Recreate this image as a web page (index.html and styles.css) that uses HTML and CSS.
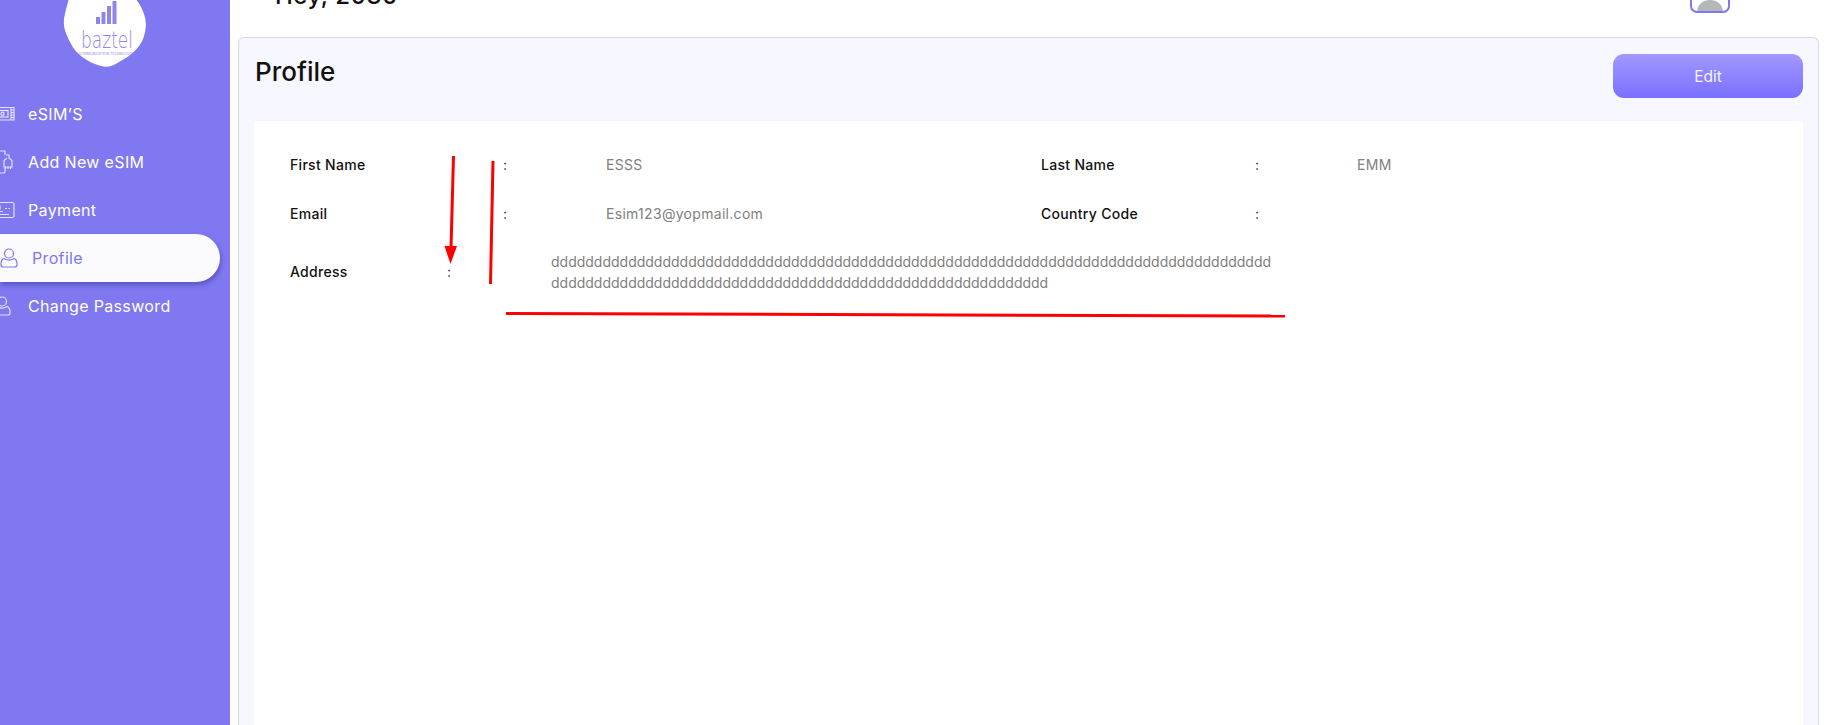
FILE: index.html
```html
<!DOCTYPE html>
<html>
  <head>
    <meta charset="utf-8" />
    <title>Profile</title>
    <link rel="stylesheet" href="styles.css">
  </head>

  <body>
    <div class="app_wrap">
      <aside class="sidebar">
        <div class="logo_wrap">
          <svg class="logo" width="84" height="68" viewBox="0 0 84 68">
            <path d="M6 -2L72 -2C80 8 85 20 82 32C80 46 68 56 56 62C50 66 44 68 38 66C26 63 12 54 7 42C2 32 -1 24 2 14C3 8 5 3 6 -2Z" fill="#fff" />
            <g fill="#8f86ea">
              <rect x="33" y="17" width="4" height="7" />
              <rect x="38.500" y="12" width="4" height="12" />
              <rect x="44" y="6" width="4" height="18" />
              <rect x="49.500" y="1" width="4" height="23" />
            </g>
            <text class="logo_name" x="18" y="48" textLength="52" lengthAdjust="spacingAndGlyphs">baztel</text>
            <text class="logo_tag" x="16" y="54.500" textLength="55" lengthAdjust="spacingAndGlyphs">COMMUNICATION TECHNOLOGY</text>
          </svg>
        </div>

        <nav class="menu">
          <a class="menu_item">
            <svg class="menu_icon" width="20" height="20" viewBox="0 0 20 20">
              <path d="M-1 3.500H19V16H-1M16 3.500V16M16 6H19M16 8.500H19M16 11H19M16 13.500H19" />
              <rect x="2" y="6.500" width="11" height="6.500" />
              <circle cx="7.500" cy="9.700" r="1.600" />
            </svg>
            <span>eSIM’S</span>
          </a>
          <a class="menu_item">
            <svg class="menu_icon" width="20" height="24" viewBox="0 0 20 24">
              <path d="M-1 1H10V5M10 18V22C10 23 9 23 8 23H-1" />
              <path d="M11 5H14V8L17 10.500V17H9V10.500L12 8" />
              <path d="M10.500 17V19M13 17V19M15.500 17V19" />
            </svg>
            <span>Add New eSIM</span>
          </a>
          <a class="menu_item">
            <svg class="menu_icon" width="20" height="20" viewBox="0 0 20 20">
              <path d="M-1 2.500H17C18 2.500 19 3.500 19 4.500V16C19 17 18 17.500 17 17.500H-1" />
              <path d="M-1 11.500H8M-1 14.500H14M10 8.500H12M13.500 8.500H15M2 6H5V9H2Z" />
            </svg>
            <span>Payment</span>
          </a>
          <a class="menu_item menu_active">
            <svg class="menu_icon" width="18" height="20" viewBox="0 0 18 20">
              <circle cx="9" cy="5.500" r="4.500" />
              <path d="M4 10.500C1.500 11.500 1 13.500 1 15.500V17C1 18.500 2 19 3.500 19H14.500C16 19 17 18.500 17 17V15.500C17 13.500 16.500 11.500 14 10.500C11 12.500 7 12.500 4 10.500Z" />
            </svg>
            <span>Profile</span>
          </a>
          <a class="menu_item">
            <svg class="menu_icon" width="20" height="20" viewBox="0 0 20 20">
              <circle cx="7" cy="5.500" r="4.500" />
              <path d="M2 10.500C-0.500 11.500 -1 13.500 -1 15.500V17C-1 18.500 0 19 1.500 19H12.500C14 19 15 18.500 15 17V15.500C15 13.500 14.500 11.500 12 10.500C9 12.500 5 12.500 2 10.500Z" />
            </svg>
            <span>Change Password</span>
          </a>
        </nav>
      </aside>

      <main class="content">
        <header class="top_bar">
          <div class="greeting">Hey, 2030</div>
          <div class="avatar">
            <svg width="26" height="11" viewBox="0 0 26 11">
              <path d="M0 11C1 4 6 0 13 0C20 0 25 4 26 11Z" fill="#b5b8b8" />
            </svg>
          </div>
        </header>

        <section class="profile_card">
          <div class="card_head">
            <h1 class="card_title">Profile</h1>
            <button class="btn_edit">Edit</button>
          </div>

          <div class="card_body">
            <div class="info_grid">
              <div class="info_label">First Name</div>
              <div class="info_colon">:</div>
              <div class="info_value">ESSS</div>
              <div class="info_label">Last Name</div>
              <div class="info_colon">:</div>
              <div class="info_value">EMM</div>

              <div class="info_label">Email</div>
              <div class="info_colon">:</div>
              <div class="info_value">Esim123@yopmail.com</div>
              <div class="info_label">Country Code</div>
              <div class="info_colon">:</div>
              <div class="info_value"></div>
            </div>

            <div class="address_row">
              <div class="info_label">Address</div>
              <div class="info_colon">:</div>
              <div class="info_value address_text">dddddddddddddddddddddddddddddddddddddddddddddddddddddddddddddddddddddddddddddddddddd<br />dddddddddddddddddddddddddddddddddddddddddddddddddddddddddd</div>
            </div>
          </div>
        </section>
      </main>

      <!-- red marks drawn over the screenshot -->
      <svg class="marks" width="1827" height="725" viewBox="0 0 1827 725">
        <path d="M453.500 156L451 248" stroke="#f00" stroke-width="3" fill="none" />
        <path d="M444.500 246H457L450.500 264Z" fill="#f00" />
        <path d="M493 161L490.500 284" stroke="#f00" stroke-width="3" fill="none" />
        <path d="M506 313.500L1285 316" stroke="#f00" stroke-width="3" fill="none" />
      </svg>
    </div>
  </body>
</html>
```

FILE: styles.css
```css
html,
body {
  margin: 0;
  padding: 0;
  height: 100%;
  overflow: hidden;
  background: #fff;
  font-family: Inter, "Noto Sans", sans-serif;
}
.app_wrap {
  position: relative;
  display: flex;
  height: 100vh;
}

/* sidebar */
.sidebar {
  flex: 0 0 230px;
  background: #7f78f1;
}
.logo_wrap {
  height: 90px;
  padding-left: 63px;
  overflow: hidden;
}
.logo {
  display: block;
  overflow: hidden;
}
.logo_name {
  font-family: "DejaVu Sans", sans-serif;
  font-size: 23px;
  font-weight: 200;
  fill: #8f86ea;
}
.logo_tag {
  font-size: 3px;
  fill: #8f86ea;
}
.menu {
  display: flex;
  flex-direction: column;
}
.menu_item {
  display: flex;
  align-items: center;
  gap: 13px;
  height: 48px;
  color: #fff;
  font-size: 16px;
  letter-spacing: 0.35px;
}
.menu_icon {
  flex: none;
  overflow: visible;
  margin-left: -5px;
  fill: none;
  stroke: #e4e2fc;
  stroke-width: 1.200;
}
.menu_active {
  gap: 14px;
  margin-right: 10px;
  background: #fbfbfd;
  color: #7f78f1;
  border-radius: 0 24px 24px 0;
  box-shadow: 1px 3px 5px rgba(50, 40, 130, 0.45);
}
.menu_active .menu_icon {
  margin-left: 0;
  stroke: #7f78f1;
}

/* right side */
.content {
  flex: 1;
  display: flex;
  flex-direction: column;
  min-width: 0;
  padding: 0 8px 0 8px;
}
.top_bar {
  flex: 0 0 37px;
  display: flex;
  justify-content: space-between;
  align-items: flex-end;
  padding: 0 89px 0 37px;
  overflow: hidden;
}
.greeting {
  flex: none;
  margin-bottom: 26px;
  color: #111;
  font-size: 24px;
  line-height: 30px;
  font-weight: 500;
  letter-spacing: 0.5px;
  white-space: nowrap;
}
.avatar {
  flex: none;
  display: flex;
  align-items: flex-end;
  justify-content: center;
  box-sizing: border-box;
  width: 40px;
  height: 30px;
  margin-bottom: 24px;
  border: 2px solid #7f78f1;
  border-radius: 7px;
  background: #fff;
}
.avatar svg {
  display: block;
}

.profile_card {
  flex: 1;
  display: flex;
  flex-direction: column;
  min-height: 0;
  padding: 16px 15px 0 15px;
  background: #f7f7ff;
  border: 1px solid #d9d9e3;
  border-bottom: 0;
  border-radius: 6px 6px 0 0;
}
.card_head {
  flex: 0 0 67px;
  display: flex;
  justify-content: space-between;
  align-items: flex-start;
}
.card_title {
  margin: 0;
  padding: 2px 0 0 1px;
  color: #111;
  font-size: 26px;
  line-height: 32px;
  font-weight: 500;
}
.btn_edit {
  width: 190px;
  height: 44px;
  border: 0;
  border-radius: 11px;
  background: linear-gradient(180deg, #a198ff 0%, #7a70ff 100%);
  color: #f5f4ff;
  font-family: inherit;
  font-size: 15.500px;
}
.card_body {
  flex: 1;
  padding: 32px 36px 0 36px;
  background: #fff;
}

/* info rows */
.info_grid {
  display: grid;
  grid-template-columns: 213px 103px 435px 214px 102px 1fr;
  grid-auto-rows: 49px;
  align-items: start;
}
.address_row {
  display: grid;
  grid-template-columns: 157px 104px 1fr;
  align-items: center;
}
.info_label {
  color: #111;
  font-size: 14px;
  line-height: 24px;
  font-weight: 500;
  letter-spacing: 0.3px;
}
.info_colon {
  color: #333;
  font-size: 14px;
  line-height: 24px;
}
.info_value {
  color: #808080;
  font-size: 14px;
  line-height: 24px;
  letter-spacing: 0.3px;
}
.address_text {
  line-height: 21px;
  letter-spacing: 0;
  white-space: nowrap;
}

/* overlay */
.marks {
  position: absolute;
  top: 0;
  left: 0;
  pointer-events: none;
}
```
